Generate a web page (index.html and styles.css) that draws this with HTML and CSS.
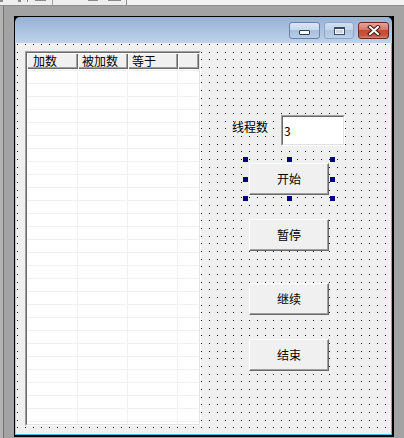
FILE: index.html
```html
<!DOCTYPE html>
<html lang="zh-CN">
<head>
<meta charset="utf-8">
<title>Dialog</title>
<link rel="stylesheet" href="styles.css">
</head>
<body>
<div class="ide">
  <div class="toolbar">
    <div class="tb-left">
      <span class="frag f1"></span>
      <span class="frag f2"></span>
      <span class="frag f3"></span>
      <span class="frag f4"></span>
      <span class="frag f5"></span>
      <span class="frag f6"></span>
      <span class="frag f7"></span>
    </div>
  </div>
  <div class="workspace">
    <div class="edge"></div>
    <div class="dialog">
      <div class="titlebar">
        <div class="cb cb-min"><span class="glyph-min"></span></div>
        <div class="cb cb-max"><span class="glyph-max"></span></div>
        <div class="cb cb-close">
          <svg class="glyph-close" width="14" height="11" viewBox="0 0 14 11">
            <path d="M3 2 L11 9 M11 2 L3 9" stroke="#4a1410" stroke-width="4" stroke-linecap="square" fill="none"/>
            <path d="M3 2 L11 9 M11 2 L3 9" stroke="#ffffff" stroke-width="2" stroke-linecap="square" fill="none"/>
          </svg>
        </div>
      </div>
      <div class="client">
        <div class="list">
          <div class="list-frame">
            <div class="list-header">
              <div class="hcol hc1">加数</div>
              <div class="hcol hc2">被加数</div>
              <div class="hcol hc3">等于</div>
              <div class="hcol hc4"></div>
            </div>
            <div class="list-body">
              <div class="bcol bc1"></div>
              <div class="bcol bc2"></div>
              <div class="bcol bc3"></div>
              <div class="bcol bc4"></div>
            </div>
          </div>
        </div>
        <div class="side">
          <div class="field-row">
            <span class="label">线程数</span>
            <div class="edit"><div class="edit-inner">3</div></div>
          </div>
          <div class="btn btn-start">开始
            <div class="handles">
              <div class="hrow"><span class="h"></span><span class="h"></span><span class="h"></span></div>
              <div class="hrow"><span class="h"></span><span class="h"></span></div>
              <div class="hrow"><span class="h"></span><span class="h"></span><span class="h"></span></div>
            </div>
          </div>
          <div class="btn btn-pause">暂停</div>
          <div class="btn btn-resume">继续</div>
          <div class="btn btn-end">结束</div>
        </div>
      </div>
    </div>
  </div>
</div>
</body>
</html>
```

FILE: styles.css
```css
html, body {
  margin: 0;
  padding: 0;
}
body {
  width: 404px;
  height: 438px;
  overflow: hidden;
  background: #a3a3a3;
  font-family: "Noto Sans CJK SC", "Noto Sans", sans-serif;
  font-size: 12px;
  color: #000;
}
.ide {
  height: 438px;
  display: flex;
  flex-direction: column;
}

/* top toolbar remnant */
.toolbar {
  height: 5px;
  flex: none;
  background: #f2f2f2;
  border-bottom: 1px solid #8e8e8e;
  display: flex;
}
.tb-left {
  width: 126px;
  border-right: 1px solid #8a8a8a;
  display: flex;
  align-items: flex-start;
  background: #eeeeee;
}
.frag {
  flex: none;
  height: 2px;
  background: #8a8a8a;
}
.f1 { width: 3px; }
.f2 { width: 3px; margin-left: 15px; }
.f3 { width: 1px; margin-left: 6px; }
.f4 { width: 11px; margin-left: 7px; height: 1px; }
.f5 { width: 1px; margin-left: 6px; height: 5px; background: #a0a0a0; }
.f6 { width: 10px; margin-left: 35px; height: 1px; }
.f7 { width: 13px; margin-left: 10px; height: 1px; }

/* MDI workspace */
.workspace {
  flex: 1;
  display: flex;
  align-items: flex-start;
}
.edge {
  width: 3px;
  align-self: stretch;
  background: #b3b3b3;
  border-right: 1px solid #727272;
}
.dialog {
  margin: 10px 0 0 10px;
  width: 377px;
  height: 418px;
  border: 1px solid #000;
  border-right-width: 2px;
  border-bottom-width: 2px;
  background: #000;
  display: flex;
  flex-direction: column;
}

/* title bar */
.titlebar {
  height: 26px;
  flex: none;
  box-sizing: border-box;
  border-radius: 5px 5px 0 0;
  background: linear-gradient(#97b2d4 0%, #a9c2e0 50%, #bfd4eb 100%);
  display: flex;
  justify-content: flex-end;
  align-items: flex-start;
  gap: 4px;
  padding: 5px 3px 0 0;
}
.cb {
  height: 17px;
  box-sizing: border-box;
  border: 1px solid #6a82a4;
  border-radius: 3px;
  display: flex;
  align-items: center;
  justify-content: center;
}
.cb-min {
  width: 31px;
  background: linear-gradient(#dbe6f3 0%, #c7d8ec 45%, #a9c1de 50%, #b7cde7 100%);
}
.cb-max {
  width: 30px;
  border-color: #8ea6c6;
  background: linear-gradient(#d3e0ef 0%, #c1d4ea 45%, #adc5e1 50%, #bcd0e8 100%);
}
.cb-close {
  width: 31px;
  border-color: #6d2a22;
  background: linear-gradient(#e4a699 0%, #d47866 45%, #c24a34 50%, #c9573f 85%, #d98573 100%);
}
.glyph-min {
  width: 11px;
  height: 5px;
  box-sizing: border-box;
  margin-top: 4px;
  border: 1px solid #2d3f58;
  border-radius: 1px;
  background: #ffffff;
}
.glyph-max {
  width: 11px;
  height: 8px;
  box-sizing: border-box;
  margin-top: 1px;
  border: 1px solid #3a4c66;
  border-top-width: 2px;
  background: #cad8e8;
  box-shadow: inset 0 0 0 1px #f4f8fc;
}
.glyph-close {
  display: block;
}

/* client area with dotted grid */
.client {
  flex: 1;
  display: flex;
  align-items: flex-start;
  border-left: 1px solid #abc8e8;
  border-right: 1px solid #3ec3ec;
  border-bottom: 1px solid #3ec3ec;
  background-color: #f0f0f0;
  background-image:
    linear-gradient(to bottom, transparent 0 1px, #f0f0f0 1px 8px, transparent 8px 9px, #f0f0f0 9px 15px, transparent 15px 16px, #f0f0f0 16px),
    linear-gradient(to right, #000 0 1px, #f0f0f0 1px);
  background-size: 100% 23px, 8px 100%;
  background-position: 0 1px, 1px 0;
}

/* list control */
.list {
  margin: 8px 0 0 9px;
  width: 176px;
  height: 375px;
  box-sizing: border-box;
  border: 1px solid;
  border-color: #a0a0a0 #ffffff #ffffff #a0a0a0;
  display: flex;
  flex: none;
}
.list-frame {
  flex: 1;
  border: 1px solid;
  border-color: #696969 #e3e3e3 #e3e3e3 #696969;
  background: #ffffff;
  display: flex;
  flex-direction: column;
  overflow: hidden;
}
.list-header {
  height: 16px;
  flex: none;
  display: flex;
  background: #f0f0f0;
}
.hcol {
  box-sizing: border-box;
  height: 16px;
  line-height: 16px;
  padding-left: 6px;
  white-space: nowrap;
  box-shadow: inset 1px 1px #ffffff, inset -1px -1px #696969, inset -2px -2px #a0a0a0;
}
.hc1 { width: 51px; }
.hc2 { width: 50px; padding-left: 4px; }
.hc3 { width: 50px; padding-left: 4px; }
.hc4 { flex: 1; }
.list-body {
  flex: 1;
  display: flex;
  background-image: linear-gradient(to bottom, #f0f0f0 0 1px, #ffffff 1px);
  background-size: 100% 13px;
  background-position: 0 1px;
}
.bcol {
  box-sizing: border-box;
  border-right: 1px solid #f0f0f0;
}
.bc1 { width: 51px; }
.bc2 { width: 50px; }
.bc3 { width: 50px; }
.bc4 { flex: 1; border-right: none; }

/* right side controls */
.side {
  display: flex;
  flex-direction: column;
  align-items: flex-start;
  padding-top: 72px;
}
.field-row {
  display: flex;
  align-items: flex-start;
  margin-left: 31px;
}
.label {
  margin-top: 6px;
  line-height: 12px;
  white-space: nowrap;
}
.edit {
  margin-left: 13px;
  width: 64px;
  height: 31px;
  box-sizing: border-box;
  border: 1px solid;
  border-color: #a0a0a0 #ffffff #ffffff #a0a0a0;
  display: flex;
}
.edit-inner {
  flex: 1;
  border: 1px solid;
  border-color: #696969 #e3e3e3 #e3e3e3 #696969;
  background: #ffffff;
  line-height: 27px;
  padding-left: 1px;
}
.btn {
  position: relative;
  margin-left: 48px;
  width: 80px;
  height: 32px;
  box-sizing: border-box;
  border: 1px solid;
  border-color: #ffffff #696969 #696969 #ffffff;
  box-shadow: inset -1px -1px #a0a0a0;
  background: #f0f0f0;
  display: flex;
  align-items: center;
  justify-content: center;
  line-height: 12px;
}
.btn-start { margin-top: 17px; }
.btn-pause { margin-top: 24px; }
.btn-resume { margin-top: 32px; }
.btn-end { margin-top: 24px; }

/* selection handles */
.handles {
  position: absolute;
  inset: -7px;
  display: flex;
  flex-direction: column;
  justify-content: space-between;
  pointer-events: none;
}
.hrow {
  display: flex;
  justify-content: space-between;
}
.h {
  width: 5px;
  height: 5px;
  background: #000080;
}
```
